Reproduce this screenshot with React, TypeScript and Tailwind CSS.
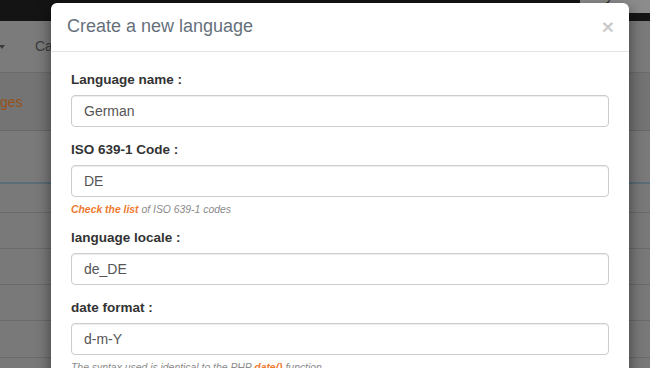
import React from "react";

const rows = ["h-[29px]", "h-[36px]", "h-[36px]", "h-[36px]", "h-[37px]", "h-[20px]"];

function Field({
  label,
  value,
  help,
}: {
  label: string;
  value: string;
  help?: React.ReactNode;
}) {
  return (
    <div className={help ? "mb-[10px]" : "mb-[13px]"}>
      <label className="block text-[13.5px] font-bold leading-[20px] text-[#333] mb-[5px]">
        {label}
      </label>
      <input
        readOnly
        value={value}
        className="block w-full h-[32px] px-[12px] rounded-[4px] border border-[#ccc] bg-white text-[14px] text-[#555] shadow-[inset_0_1px_1px_rgba(0,0,0,0.075)] outline-none"
      />
      {help && (
        <p className="mt-[5px] text-[10.4px] italic leading-[16px] text-[#8a8a8a]">{help}</p>
      )}
    </div>
  );
}

export default function App() {
  return (
    <div className="relative w-[650px] h-[368px] overflow-hidden bg-[#777] font-['Liberation_Sans',Arial,sans-serif]">
      {/* page behind the backdrop */}
      <div className="h-[21px] bg-[#141414] flex justify-end">
        <div className="w-[70px] h-[13px] bg-[#8c8c8c] overflow-hidden">
          <span className="block -mt-[11px] pl-[8px] text-[13px] leading-[14px] text-[#222]">Hilly Sh</span>
        </div>
      </div>
      <div className="h-[52px] bg-[#7b7b7b] border-b border-[#6c6c6c] flex items-center">
        <svg width="6" height="4" viewBox="0 0 6 4" className="-ml-[1px]">
          <path d="M0 0h6L3 4z" fill="#3a3a3a" />
        </svg>
        <span className="ml-[30px] text-[14px] text-[#3b3b3b]">Ca</span>
      </div>
      <div className="h-[58px] bg-[#747474] border-b border-[#686868] flex items-center">
        <span className="text-[14px] text-[#96521a] pt-[2px]">ges</span>
      </div>
      <div className="h-[53px] bg-[#7a7a7a] border-b-2 border-[#5b6d77]" />
      {rows.map((h, i) => (
        <div key={i} className={`${h} bg-[#797979] border-b border-[#6a6a6a]`} />
      ))}

      {/* modal */}
      <div className="absolute left-[51px] top-[3px] w-[578px] bg-white rounded-[6px] shadow-[0_5px_15px_rgba(0,0,0,0.5)]">
        <div className="flex items-start justify-between px-[16px] pt-[11px] pb-[12px] border-b border-[#e5e5e5]">
          <h4 className="text-[18px] leading-[25px] text-[#66707c]">Create a new language</h4>
          <button className="text-[21px] font-bold leading-[25px] text-black opacity-20 -mr-[1px]">×</button>
        </div>
        <div className="px-[20px] pt-[18px]">
          <Field label="Language name :" value="German" />
          <Field
            label="ISO 639-1 Code :"
            value="DE"
            help={
              <>
                <span className="font-bold text-[#ee7a32]">Check the list</span> of ISO 639-1 codes
              </>
            }
          />
          <Field label="language locale :" value="de_DE" />
          <Field
            label="date format :"
            value="d-m-Y"
            help={
              <>
                The syntax used is identical to the PHP <span className="font-bold text-[#ee7a32]">date()</span> function
              </>
            }
          />
        </div>
      </div>
    </div>
  );
}
